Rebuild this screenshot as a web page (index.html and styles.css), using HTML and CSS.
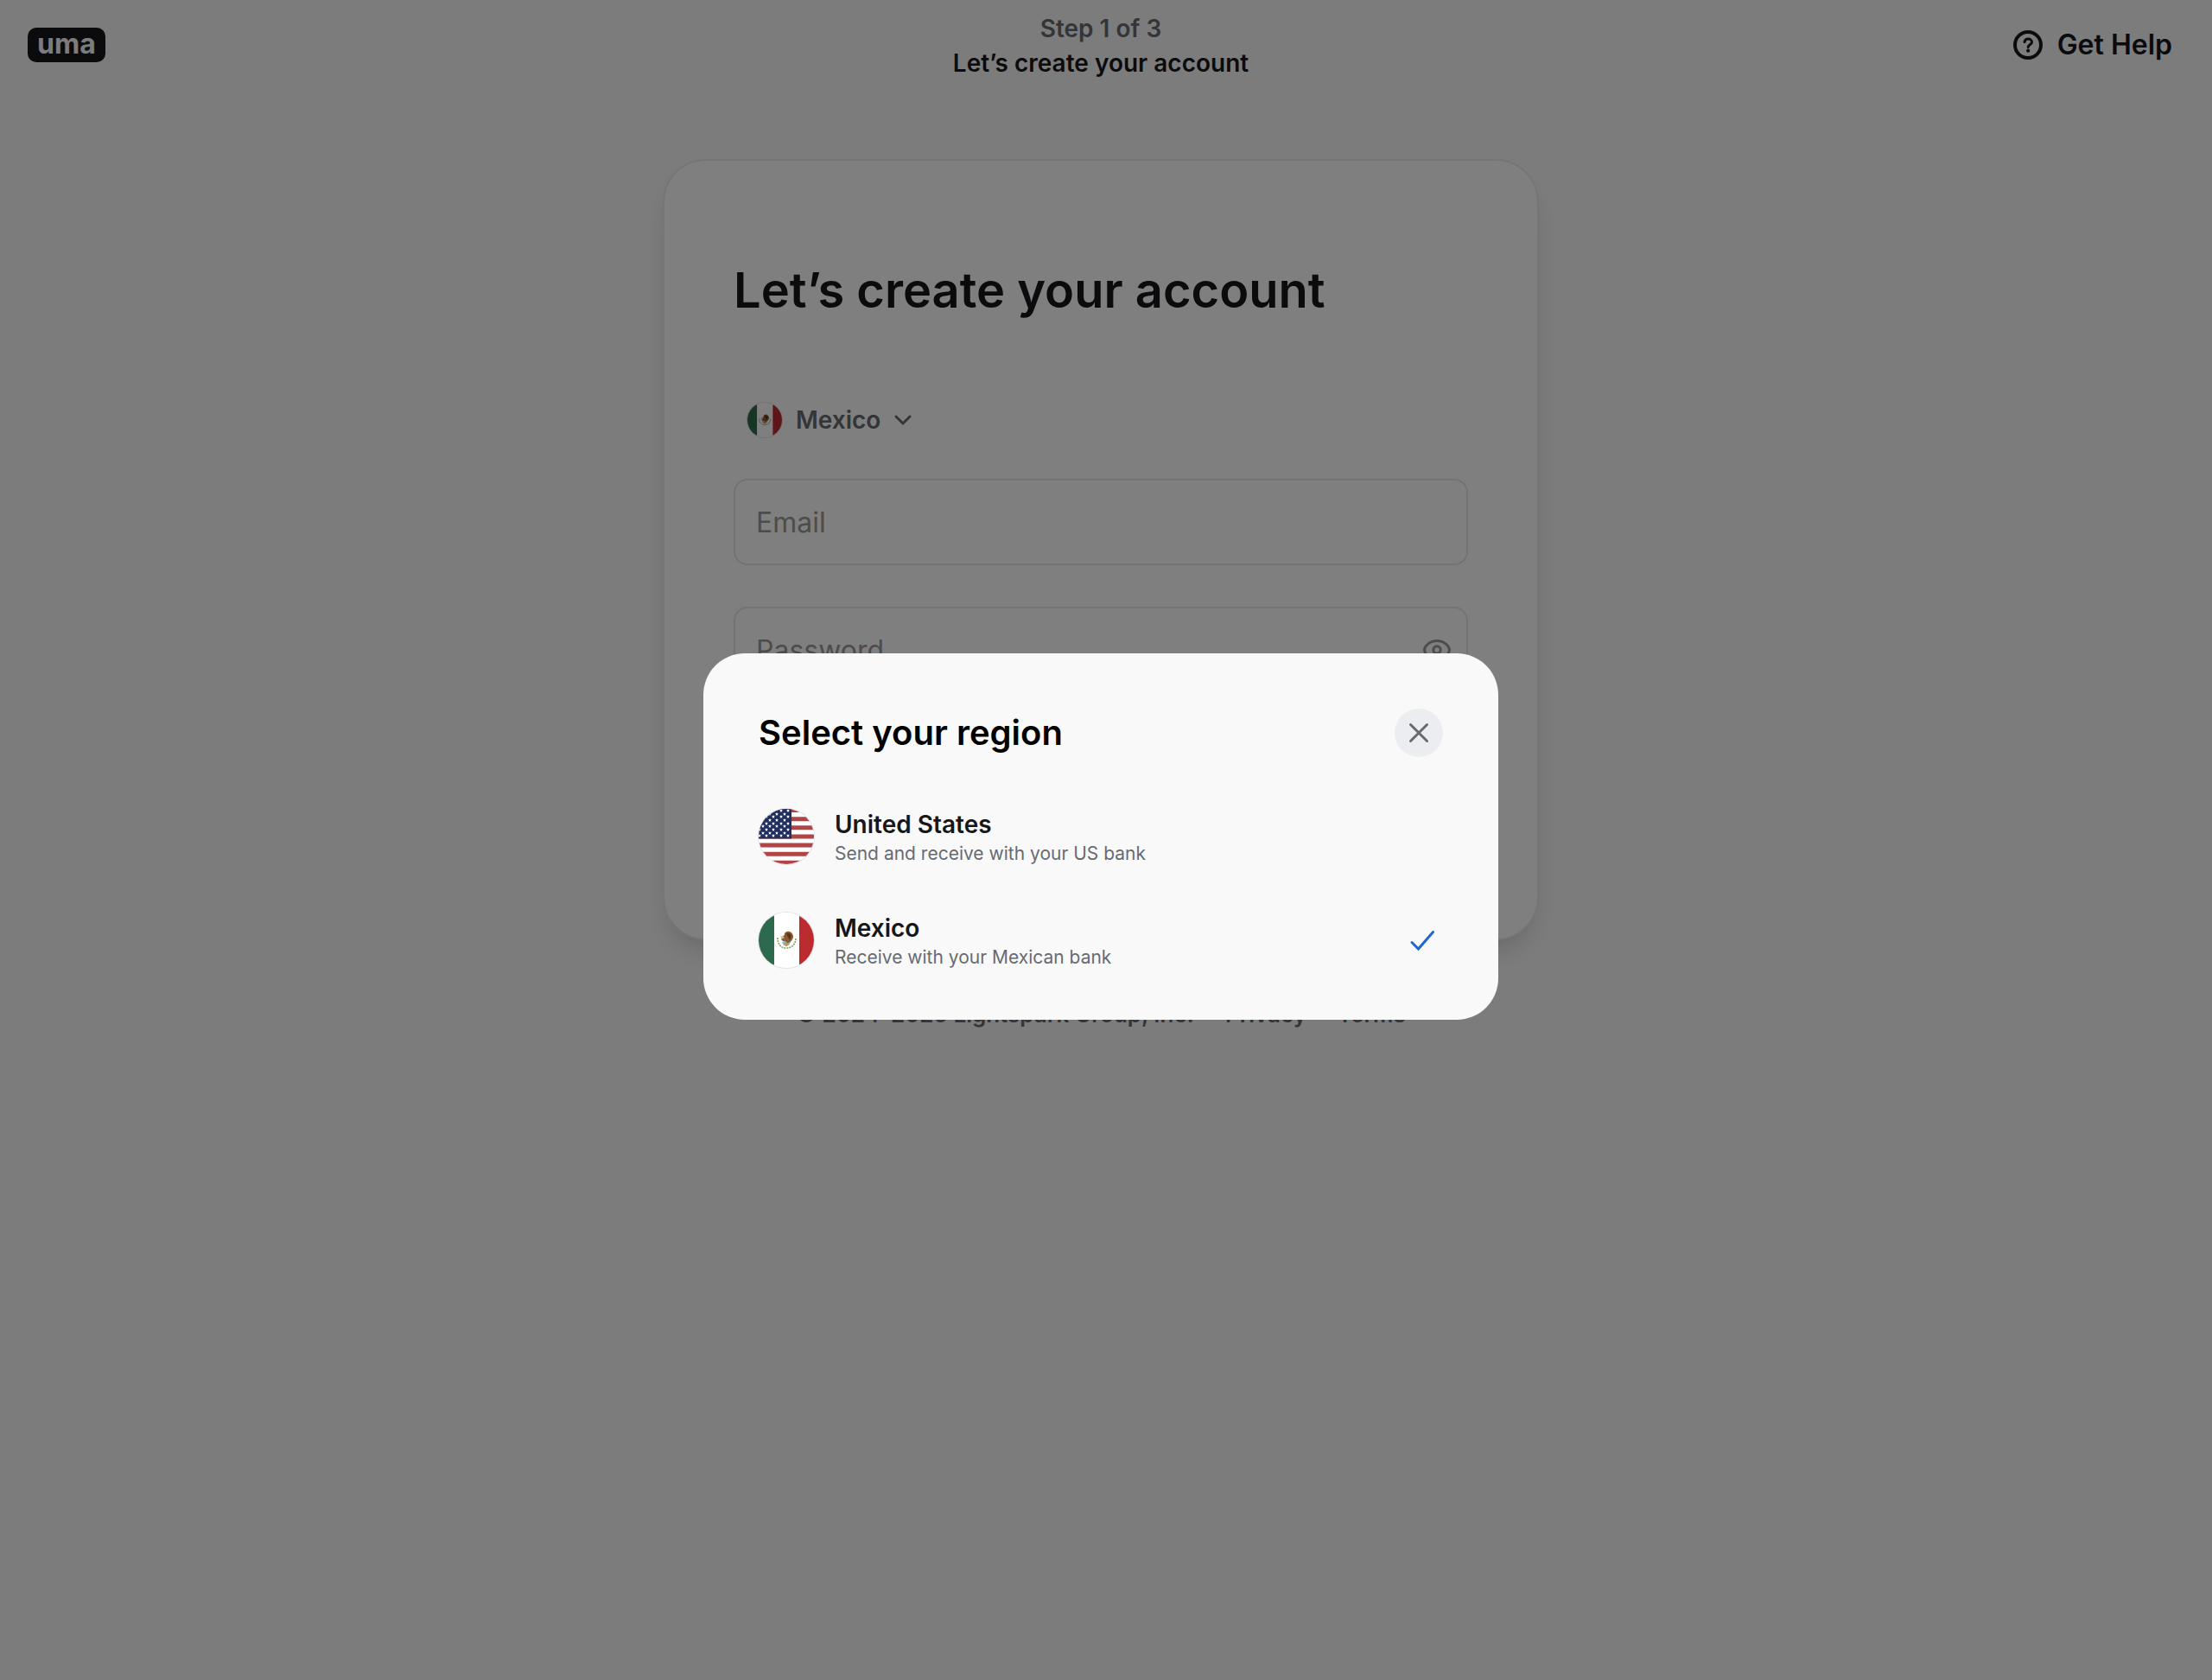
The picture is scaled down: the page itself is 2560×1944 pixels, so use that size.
FILE: index.html
```html
<!DOCTYPE html>
<html lang="en">
<head>
<meta charset="utf-8">
<meta name="viewport" content="width=device-width, initial-scale=1">
<title>UMA – Let’s create your account</title>
<link rel="stylesheet" href="styles.css">
</head>
<body>
<svg class="sprite" aria-hidden="true">
  <symbol id="flag-mx" viewBox="0 0 64 64">
    <rect width="18" height="64" fill="#2c6a4b"/>
    <rect x="18" width="29" height="64" fill="#fff"/>
    <rect x="47" width="17" height="64" fill="#bb2b30"/>
    <path d="M22 29c0 7 3 12 10 12s11-5 11-12" fill="none" stroke="#8f9560" stroke-width="1.6" stroke-dasharray="2 1"/>
    <path d="M27 34h10l-2 4h-6z" fill="#74bdd0"/>
    <path d="M30 35h5l-2 4h-2z" fill="#d58f3c"/>
    <path d="M26 31c1-2 3-2 4-1l-2-3 2-1c-1-3 3-5 6-4 4 2 5 6 3 9-1 2-3 4-6 4-1-2-4-1-5-2z" fill="#8a5a32"/>
    <path d="M32 24c3-1 5 0 6 3l-2 5c-1-3-3-4-4-8z" fill="#5c3517"/>
    <path d="M25 27l4 1-2 3z" fill="#c9b98c"/>
  </symbol>
  <symbol id="flag-us" viewBox="0 0 64 64">
    <defs>
      <path id="star" d="M0-2l.6 1.3 1.4.1-1.1.9.4 1.5L0 1l-1.3.8.4-1.5L-2-.6l1.4-.1z" fill="#fff"/>
      <g id="stars-a"><use href="#star" x="1"/><use href="#star" x="9"/><use href="#star" x="17"/><use href="#star" x="26"/><use href="#star" x="34"/></g>
      <g id="stars-b"><use href="#star" x="5"/><use href="#star" x="13"/><use href="#star" x="21"/><use href="#star" x="30"/></g>
    </defs>
    <rect width="64" height="64" fill="#fff"/>
    <path d="M0 1.5h64M0 11.7h64M0 21.8h64M0 31.9h64M0 42h64M0 52.2h64M0 62.3h64" stroke="#b04548" stroke-width="5"/>
    <rect width="38" height="34.5" fill="#202f5f"/>
    <use href="#stars-a" y="2"/><use href="#stars-b" y="6"/><use href="#stars-a" y="9"/><use href="#stars-b" y="13"/><use href="#stars-a" y="17"/><use href="#stars-b" y="20"/><use href="#stars-a" y="24"/><use href="#stars-b" y="28"/><use href="#stars-a" y="31"/>
  </symbol>
</svg>

<div class="page">
  <header class="topbar">
    <a class="logo" href="#">uma</a>
    <div class="progress">
      <span class="progress-step">Step 1 of 3</span>
      <span class="progress-title">Let’s create your account</span>
    </div>
    <a class="help" href="#">
      <svg class="help-icon" viewBox="0 0 36 36" fill="none" stroke="currentColor" aria-hidden="true">
        <circle cx="18" cy="18" r="15" stroke-width="4"/>
        <path d="M14 14.600c.5-2.400 2-3.600 4.200-3.600 2.500 0 4.300 1.500 4.300 3.700 0 3-4.300 3.100-4.300 5.800" stroke-width="3" stroke-linecap="round"/>
        <circle cx="18.200" cy="24.700" r="2.100" fill="currentColor" stroke="none"/>
      </svg>
      Get Help
    </a>
  </header>

  <main class="card">
    <h1 class="card-title">Let’s create your account</h1>
    <form class="form">
      <button class="region-button" type="button">
        <svg class="flag flag-small" aria-hidden="true"><use href="#flag-mx"/></svg>
        Mexico
        <svg class="chevron" viewBox="2 2 20 20" fill="none" stroke="currentColor" stroke-width="3" stroke-linecap="round" stroke-linejoin="round" aria-hidden="true"><path d="M4 8l8 8 8-8"/></svg>
      </button>
      <div class="field">
        <input class="field-input" type="email" placeholder="Email" aria-label="Email">
      </div>
      <div class="field">
        <input class="field-input" type="password" placeholder="Password" aria-label="Password">
        <button class="reveal" type="button" aria-label="Show password">
          <svg class="reveal-icon" viewBox="0 0 32 24" fill="none" stroke="currentColor" stroke-width="3" aria-hidden="true"><path d="M16 1.500c8 0 14.500 6 14.500 10.500S24 22.500 16 22.500 1.500 16.500 1.500 12 8 1.500 16 1.500z"/><circle cx="16" cy="12" r="4.200"/></svg>
        </button>
      </div>
    </form>
  </main>

  <footer class="footer">
    <span>© 2024–2025 Lightspark Group, Inc.</span>
    <a class="footer-link" href="#">Privacy</a>
    <a class="footer-link" href="#">Terms</a>
  </footer>
</div>

<div class="overlay">
  <section class="modal" role="dialog" aria-modal="true" aria-labelledby="modal-title">
    <div class="modal-head">
      <h2 class="modal-title" id="modal-title">Select your region</h2>
      <button class="close" type="button" aria-label="Close">
        <svg class="close-icon" viewBox="0 0 24 24" fill="none" stroke="currentColor" stroke-width="3" stroke-linecap="round" aria-hidden="true"><path d="M2.500 2.500l19 19M21.500 2.500l-19 19"/></svg>
      </button>
    </div>
    <div class="regions">
      <button class="region" type="button">
        <svg class="flag" aria-hidden="true"><use href="#flag-us"/></svg>
        <span class="region-text">
          <span class="region-name">United States</span>
          <span class="region-note">Send and receive with your US bank</span>
        </span>
      </button>
      <button class="region" type="button" aria-pressed="true">
        <svg class="flag" aria-hidden="true"><use href="#flag-mx"/></svg>
        <span class="region-text">
          <span class="region-name">Mexico</span>
          <span class="region-note">Receive with your Mexican bank</span>
        </span>
        <svg class="check" viewBox="0 0 48 48" fill="none" stroke="currentColor" stroke-width="3" stroke-linecap="round" aria-hidden="true"><path d="M12 26.500l7.500 7.500 17-19.500"/></svg>
      </button>
    </div>
  </section>
</div>
</body>
</html>
```
FILE: styles.css
```css
*,
*::before,
*::after {
  box-sizing: border-box;
}

body {
  margin: 0;
  background: #f9f9f9;
  color: #16171a;
  font-family: Inter, "Liberation Sans", sans-serif;
  font-weight: 600;
}

button {
  margin: 0;
  padding: 0;
  border: 0;
  background: none;
  color: inherit;
  font: inherit;
  cursor: pointer;
}

a {
  color: inherit;
  text-decoration: none;
}

h1,
h2 {
  margin: 0;
}

svg {
  display: block;
  flex: none;
}

.sprite {
  position: absolute;
  width: 0;
  height: 0;
}

.page {
  display: flex;
  flex-direction: column;
  align-items: center;
  min-height: 100vh;
  padding-right: 12px;
}

/* Top bar */
.topbar {
  display: grid;
  grid-template-columns: 1fr auto 1fr;
  align-items: center;
  width: 100%;
  height: 104px;
  padding: 0 32px;
}

.logo {
  justify-self: start;
  padding: 0 11px 2px;
  border-radius: 10px;
  background: #16171a;
  color: #f9f9f9;
  font-size: 32px;
  font-weight: 700;
  line-height: 38px;
}

.progress {
  display: flex;
  flex-direction: column;
  align-items: center;
  padding-top: 2px;
  font-size: 28px;
  line-height: 40px;
}

.progress-step {
  color: #686a72;
}

.help {
  display: flex;
  align-items: center;
  justify-self: end;
  gap: 16px;
  padding-right: 2px;
  font-size: 32px;
  line-height: 40px;
}

.help-icon {
  width: 36px;
  height: 36px;
}

/* Sign-up card */
.card {
  width: 1014px;
  max-width: 100%;
  margin-top: 80px;
  padding: 118px 80px 284px;
  border: 2px solid #ebebeb;
  border-radius: 50px;
  background: #fff;
  box-shadow: 0 18px 32px -10px rgba(0, 0, 0, 0.18);
}

.card-title {
  font-size: 56px;
  font-weight: 600;
  line-height: 64px;
}

.form {
  display: flex;
  flex-direction: column;
  gap: 48px;
  padding-top: 98px;
}

.region-button {
  display: flex;
  align-items: center;
  align-self: flex-start;
  gap: 16px;
  padding: 0 16px;
  color: #686a72;
  font-size: 28px;
  line-height: 40px;
}

.chevron {
  width: 20px;
  height: 20px;
}

.flag {
  width: 64px;
  height: 64px;
  border-radius: 50%;
  box-shadow: 0 0 0 1px #e3e3e6;
}

.flag-small {
  width: 40px;
  height: 40px;
}

.field {
  display: flex;
  align-items: center;
  height: 100px;
  padding: 0 18px 0 24px;
  border: 2px solid #e6e6e6;
  border-radius: 16px;
}

.field-input {
  flex: 1;
  min-width: 0;
  padding: 0;
  border: 0;
  background: none;
  font: inherit;
  font-size: 32px;
  font-weight: 400;
}

.field-input::placeholder {
  color: #999;
  opacity: 1;
}

.reveal {
  color: #999;
}

.reveal-icon {
  width: 32px;
  height: 24px;
}

/* Footer */
.footer {
  display: flex;
  gap: 36px;
  padding: 66px 32px;
  color: #686a72;
  font-size: 26px;
  font-weight: 600;
  line-height: 40px;
}

/* Region dialog */
.overlay {
  position: fixed;
  inset: 0;
  display: flex;
  align-items: center;
  justify-content: center;
  padding: 0 12px 8px 0;
  background: rgba(0, 0, 0, 0.5);
}

.modal {
  width: 920px;
  max-width: 100%;
  padding: 64px 64px 56px;
  border-radius: 48px;
  background: #f9f9f9;
}

.modal-head {
  display: flex;
  align-items: center;
  justify-content: space-between;
}

.modal-title {
  color: #000;
  font-size: 40px;
  font-weight: 600;
  line-height: 56px;
}

.close {
  display: grid;
  place-items: center;
  width: 56px;
  height: 56px;
  border-radius: 50%;
  background: #ecedf1;
  color: #686a72;
}

.close-icon {
  width: 24px;
  height: 24px;
}

.regions {
  display: flex;
  flex-direction: column;
  gap: 48px;
  padding-top: 56px;
}

.region {
  display: flex;
  align-items: center;
  gap: 24px;
  height: 72px;
  text-align: left;
}

.region-text {
  display: flex;
  flex: 1;
  flex-direction: column;
  padding-top: 4px;
}

.region-name {
  font-size: 28px;
  line-height: 36px;
}

.region-note {
  color: #686a72;
  font-size: 21px;
  font-weight: 400;
  line-height: 32px;
}

.check {
  width: 48px;
  height: 48px;
  color: #2066d0;
}
```
